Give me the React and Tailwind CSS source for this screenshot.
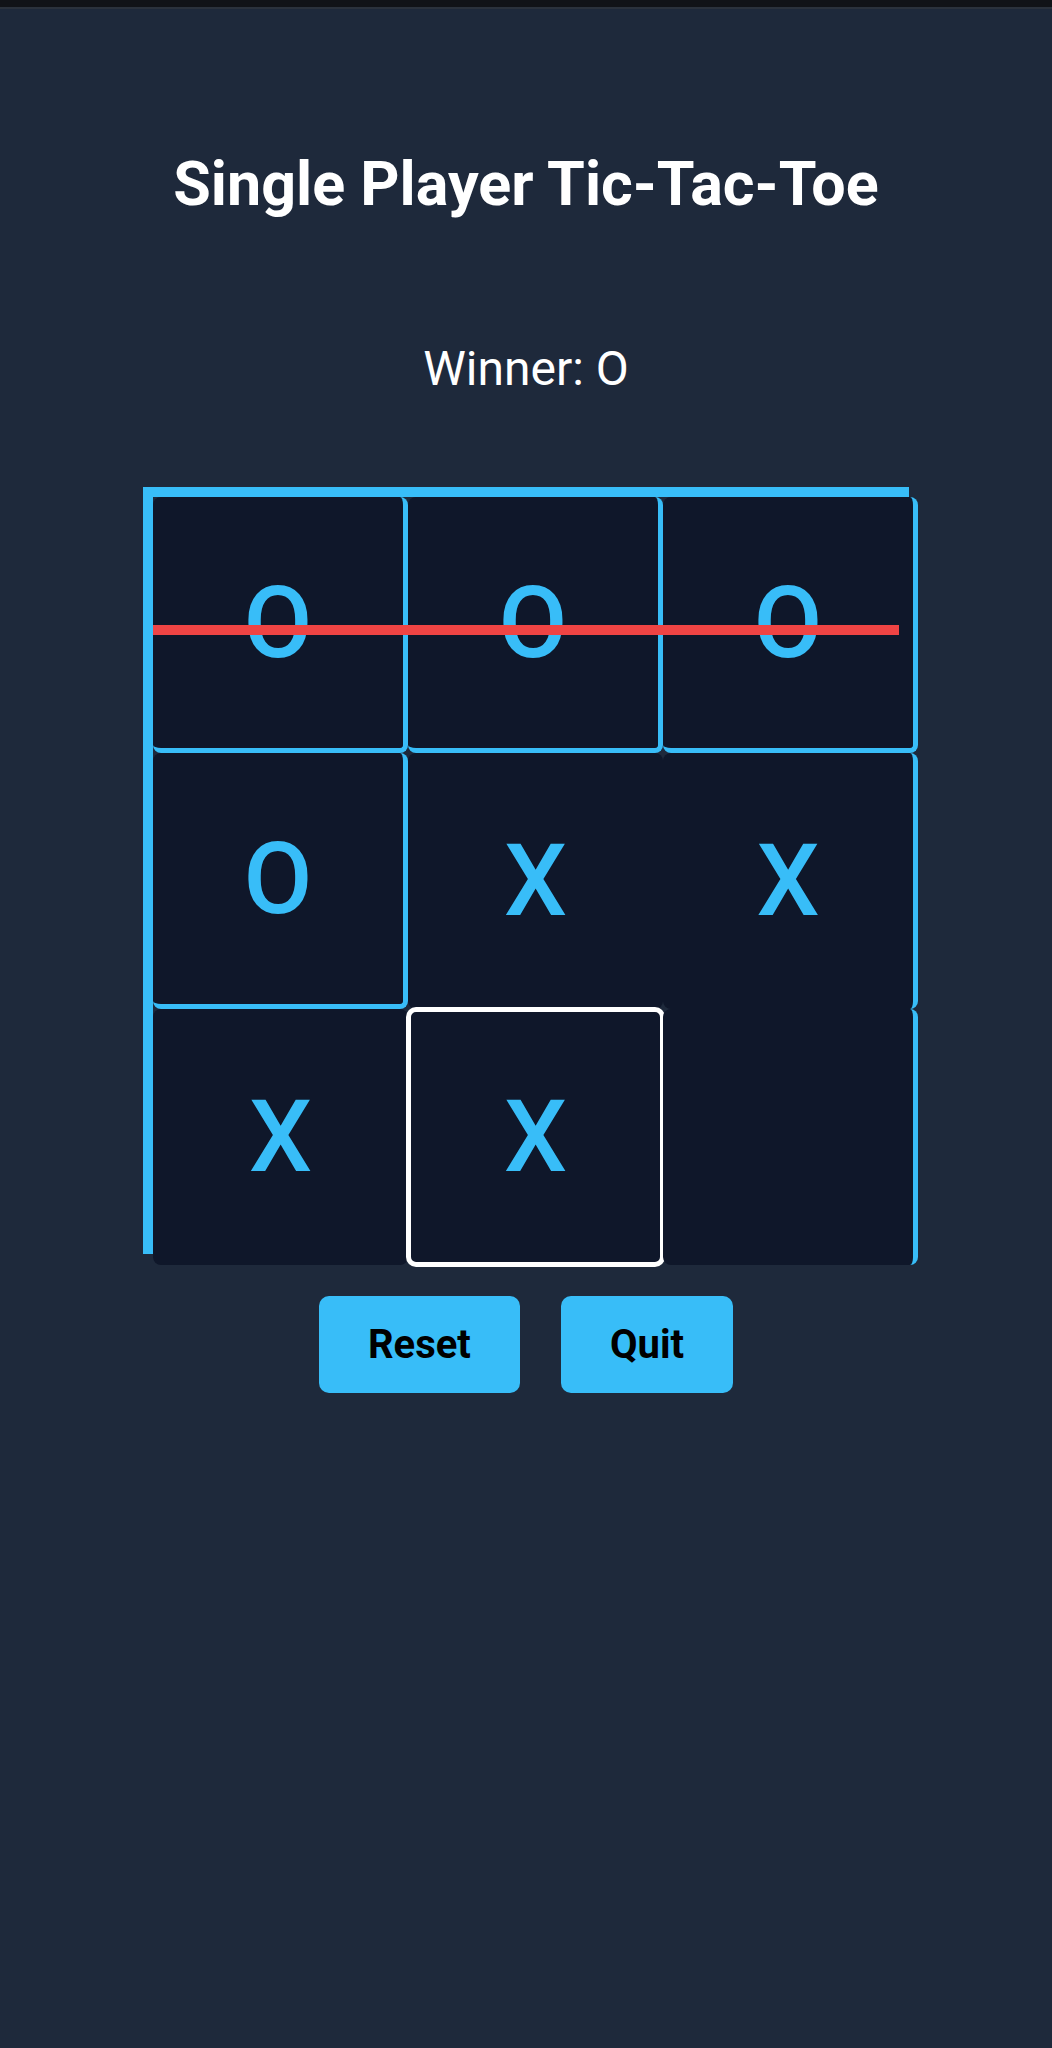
import React from 'react';

const board = ['O', 'O', 'O', 'O', 'X', 'X', 'X', 'X', ''];

// which edges of each cell carry a border in the finished game state
const cellBorders = [
    'border-r-[5px] border-b-[5px]',
    'border-r-[5px] border-b-[5px]',
    'border-r-[5px] border-b-[5px]',
    'border-r-[5px] border-b-[5px]',
    '',
    'border-r-[5px]',
    '',
    'border-[3px] !border-white shadow-[0_0_0_2px_#ffffff]',
    'border-r-[5px]',
];

const App = () => {
    return (
        <div className="min-h-screen bg-[#1e293b] font-['Roboto',sans-serif]">
            <div className="h-[7px] bg-[#111318]" />
            <div className="h-[2px] bg-[#2b323d]" />

            <div className="flex flex-col items-center">
                <h1 className="mt-[139px] text-[61px] leading-[72px] font-bold text-white">
                    Single Player Tic-Tac-Toe
                </h1>

                <p className="mt-[121px] text-[48px] leading-[56px] text-white">
                    Winner: O
                </p>

                <div className="relative mt-[90px] w-[766px] h-[767px] border-t-[10px] border-l-[10px] border-[#38bdf8]">
                    <div className="grid grid-cols-[repeat(3,255px)] grid-rows-[repeat(3,256px)]">
                        {board.map((value, index) => (
                            <div
                                key={index}
                                className={`flex items-center justify-center rounded-lg bg-[#0f172a] border-[#38bdf8] text-[100px] font-medium text-[#38bdf8] ${cellBorders[index]}`}
                            >
                                {value}
                            </div>
                        ))}
                    </div>
                    <div className="absolute left-0 top-[128px] w-[746px] h-[10px] bg-[#ef4444]" />
                </div>

                <div className="mt-[42px] flex gap-[41px]">
                    <button className="h-[97px] px-[49px] rounded-[10px] bg-[#38bdf8] text-[40px] font-bold text-black">
                        Reset
                    </button>
                    <button className="h-[97px] px-[49px] rounded-[10px] bg-[#38bdf8] text-[40px] font-bold text-black">
                        Quit
                    </button>
                </div>
            </div>
        </div>
    );
};

export default App;
